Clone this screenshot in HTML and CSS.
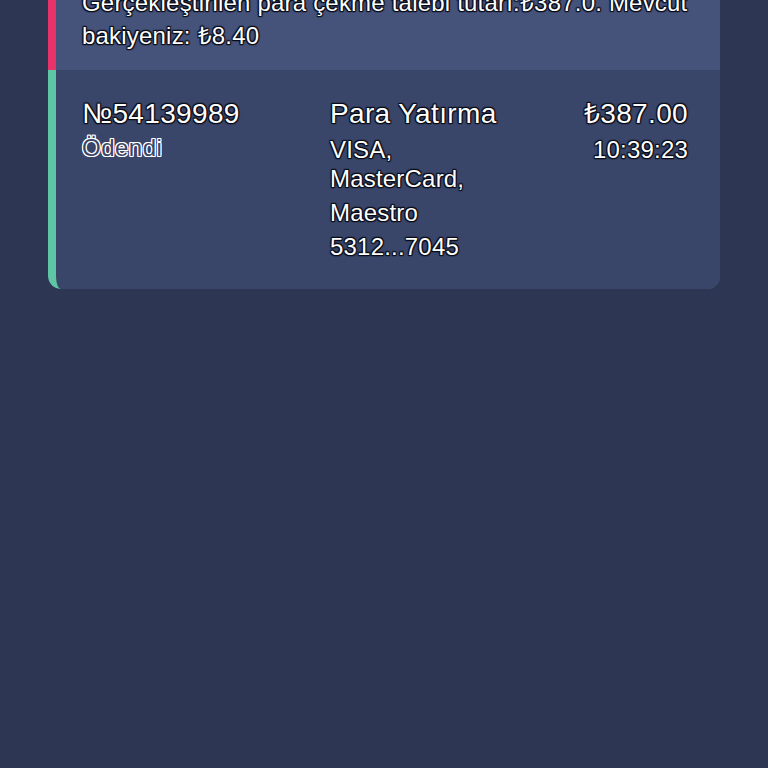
FILE: index.html
```html
<!DOCTYPE html>
<html lang="tr">
<head>
<meta charset="utf-8">
<link rel="stylesheet" href="styles.css">
</head>
<body>
<div class="list">
  <div class="card">
    <div class="row row-notice">
      <p class="notice">Gerçekleştirilen para çekme talebi tutarı:₺387.0. Mevcut bakiyeniz: ₺8.40</p>
    </div>
    <div class="row row-tx">
      <div class="col col-id">
        <div class="title">№54139989</div>
        <div class="status">Ödendi</div>
      </div>
      <div class="col col-type">
        <div class="title">Para Yatırma</div>
        <div class="brands">VISA, MasterCard,</div>
        <div class="line maestro">Maestro</div>
        <div class="line">5312...7045</div>
      </div>
      <div class="col col-amount">
        <div class="title">₺387.00</div>
        <div class="line time">10:39:23</div>
      </div>
    </div>
  </div>
</div>
</body>
</html>
```

FILE: styles.css
```css
html, body {
  margin: 0;
  padding: 0;
  background: #2d3652;
  height: 100%;
  overflow: hidden;
}
body {
  font-family: "Liberation Sans", Arial, sans-serif;
  color: #ffffff;
}
.list {
  padding: 0 48px;
  margin-top: -31px;
}
.card {
  border-radius: 0 0 13px 13px;
  overflow: hidden;
  box-shadow: inset -1px 0 0 #4b5880, inset 0 -1px 0 #4b5880;
}
.row {
  border-left: 8px solid #5ec5a5;
}
.row-notice {
  background: #45527a;
  border-left-color: #e8336a;
  padding: 17px 30px 18px 26px;
}
.notice {
  margin: 0;
  font-size: 24px;
  line-height: 33px;
  letter-spacing: 0.2px;
  text-shadow: 0 0 1px #000, 1px 1px 1px #0b0f1c, -1px -1px 1px #0b0f1c, 1px -1px 1px #0b0f1c, -1px 1px 1px #0b0f1c, 0 1px 1px #0b0f1c, 0 -1px 1px #0b0f1c;
}
.row-tx {
  background: #3a4669;
  padding: 27px 32px 25px 26px;
  display: grid;
  grid-template-columns: 248px 180px 1fr;
  text-shadow: 0 0 1px #000, 1px 1px 1px #0b0f1c, -1px -1px 1px #0b0f1c, 1px -1px 1px #0b0f1c, -1px 1px 1px #0b0f1c, 0 1px 1px #0b0f1c, 0 -1px 1px #0b0f1c;
  border-bottom-left-radius: 13px;
}
.title {
  font-size: 28px;
  line-height: 34px;
  letter-spacing: 0.35px;
}
.status {
  font-size: 24px;
  line-height: 34px;
  letter-spacing: 0.5px;
  color: #3a4669;
  text-shadow: 1px 0 0 #fff, -1px 0 0 #fff, 0 1px 0 #fff, 0 -1px 0 #fff, 1px 1px 0 #fff, -1px -1px 0 #fff, 1px -1px 0 #fff, -1px 1px 0 #fff;
}
.brands {
  font-size: 24px;
  line-height: 29px;
  letter-spacing: 0.2px;
  margin-top: 4px;
}
.line {
  font-size: 24px;
  line-height: 34px;
  letter-spacing: 0.2px;
}
.maestro {
  margin-top: 3px;
}
.time {
  margin-top: 2px;
}
.col-amount {
  text-align: right;
}
```
